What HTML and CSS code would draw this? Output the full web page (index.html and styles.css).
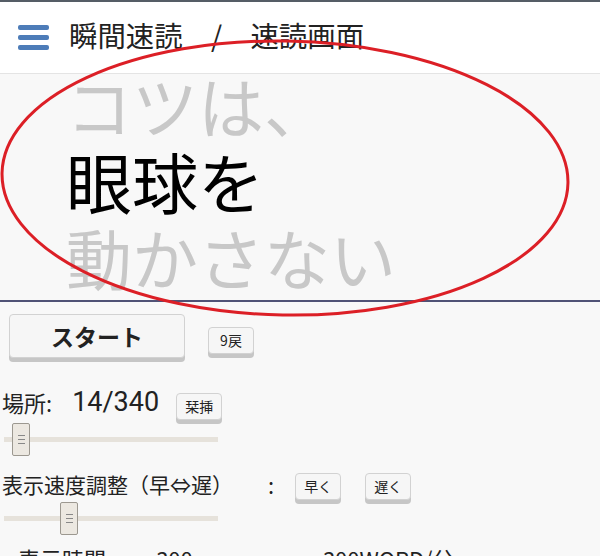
FILE: index.html
```html
<!DOCTYPE html>
<html lang="ja">
  <head>
    <meta charset="UTF-8" />
    <meta name="viewport" content="width=device-width, initial-scale=1.0" />
    <title>瞬間速読 / 速読画面</title>
    <link rel="stylesheet" href="styles.css">
  </head>
  <body>
    <!-- ヘッダー -->
    <header class="head">
      <span class="menu"><i></i><i></i><i></i></span>
      <h1 class="ttl">瞬間速読　/　速読画面</h1>
    </header>

    <!-- 表示エリア -->
    <section class="stage">
      <p class="ln dim">コツは、</p>
      <p class="ln">眼球を</p>
      <p class="ln dim">動かさない</p>
    </section>

    <!-- 操作パネル -->
    <section class="ctrl">
      <div class="row r1">
        <button class="btn big">スタート</button>
        <button class="btn sm">9戻</button>
      </div>

      <div class="row r2">
        <span class="lbl">場所:</span>
        <span class="num">14/340</span>
        <button class="btn sm">栞挿</button>
      </div>
      <div class="slider s1"><span class="thumb" style="left: 8px"></span></div>

      <div class="row r3">
        <span class="lbl">表示速度調整（早⇔遅）</span>
        <span class="colon">:</span>
        <button class="btn sm">早く</button>
        <button class="btn sm">遅く</button>
      </div>
      <div class="slider s2"><span class="thumb" style="left: 56px"></span></div>

      <div class="row r4">
        <span class="lbl">表示時間</span>
        <span class="colon">:</span>
        <span class="val">300</span>
        <span class="colon">:</span>
        <span class="val">300WORD/分</span>
      </div>
    </section>

    <!-- 赤丸の注釈 -->
    <svg class="mark" width="600" height="556">
      <ellipse cx="285" cy="178" rx="283" ry="137" transform="rotate(1,285,178)" />
    </svg>
  </body>
</html>
```

FILE: styles.css
```css
html,
body {
  margin: 0;
  padding: 0;
  overflow: hidden;
}
body {
  position: relative;
  height: 556px;
  background: #f8f8f8;
  font-family: "Noto Sans CJK JP", "Noto Sans", sans-serif;
  color: #222;
}

/* ヘッダー */
.head {
  display: flex;
  align-items: center;
  height: 74px;
  box-sizing: border-box;
  border-top: 2px solid #555d66;
  border-bottom: 1px solid #e4e4e4;
  background: #fff;
}
.menu {
  display: flex;
  flex-direction: column;
  gap: 5px;
  margin: 0 20px 0 18px;
}
.menu i {
  display: block;
  width: 31px;
  height: 5px;
  border-radius: 2px;
  background: #4d7cb8;
}
.ttl {
  margin: 0 0 6px;
  font-size: 28.4px;
  font-weight: normal;
  color: #222;
}

/* 表示エリア */
.stage {
  height: 226px;
  border-bottom: 2px solid #505276;
  overflow: hidden;
  padding-left: 66px;
}
.ln {
  margin: 0;
  font-size: 66px;
  line-height: 76px;
  color: #000;
}
.ln:first-child {
  margin-top: -8px;
}
.dim {
  color: #c8c8c8;
}

/* 操作パネル */
.row {
  display: flex;
  align-items: center;
}
.btn {
  font-family: inherit;
  color: #222;
  background: #f6f6f6;
  border: 1px solid #d2d2d2;
  border-radius: 4px;
  box-shadow: 0 4px 0 #c6c6c6;
  padding: 0;
}
.big {
  width: 176px;
  height: 44px;
  font-size: 23px;
  font-weight: bold;
}
.sm {
  width: 46px;
  height: 27px;
  font-size: 14px;
}
.r1 {
  margin: 12px 0 0 9px;
  gap: 23px;
}
.r1 .sm {
  margin-top: 8px;
}
.r2 {
  margin-top: 26px;
  height: 36px;
}
.r2 .sm {
  margin-top: 8px;
}
.lbl {
  font-size: 22px;
  padding-left: 2px;
}
.num {
  font-family: Roboto, sans-serif;
  font-size: 27px;
  margin: 0 17px 0 20px;
}

/* スライダー */
.slider {
  position: relative;
  margin-left: 4px;
  width: 214px;
  height: 5px;
  background: #e6e2db;
}
.s1 {
  margin-top: 17px;
}
.s2 {
  margin-top: 14px;
}
.thumb {
  position: absolute;
  top: -14px;
  width: 16px;
  height: 31px;
  border: 1px solid #9c9890;
  border-radius: 2px;
  background: linear-gradient(#888, #888) center 11px / 7px 1px no-repeat,
    linear-gradient(#888, #888) center 15px / 7px 1px no-repeat,
    linear-gradient(#888, #888) center 19px / 7px 1px no-repeat, #ece8e1;
}
.r3 {
  margin-top: 24px;
  height: 36px;
}
.r3 .lbl {
  font-size: 21px;
}
.r3 .colon {
  margin: 0 21px 0 35px;
  font-size: 22px;
}
.r3 .sm {
  margin-top: 4px;
}
.r3 .btn + .btn {
  margin-left: 24px;
}
.r4 {
  margin-top: 21px;
  padding-left: 16px;
  font-size: 22px;
}
.r4 .colon {
  margin: 0 30px 0 14px;
}
.r4 .val {
  margin-right: 80px;
}

/* 赤丸 */
.mark {
  position: absolute;
  top: 0;
  left: 0;
  pointer-events: none;
}
.mark ellipse {
  fill: none;
  stroke: #dc1f26;
  stroke-width: 3;
}
```
